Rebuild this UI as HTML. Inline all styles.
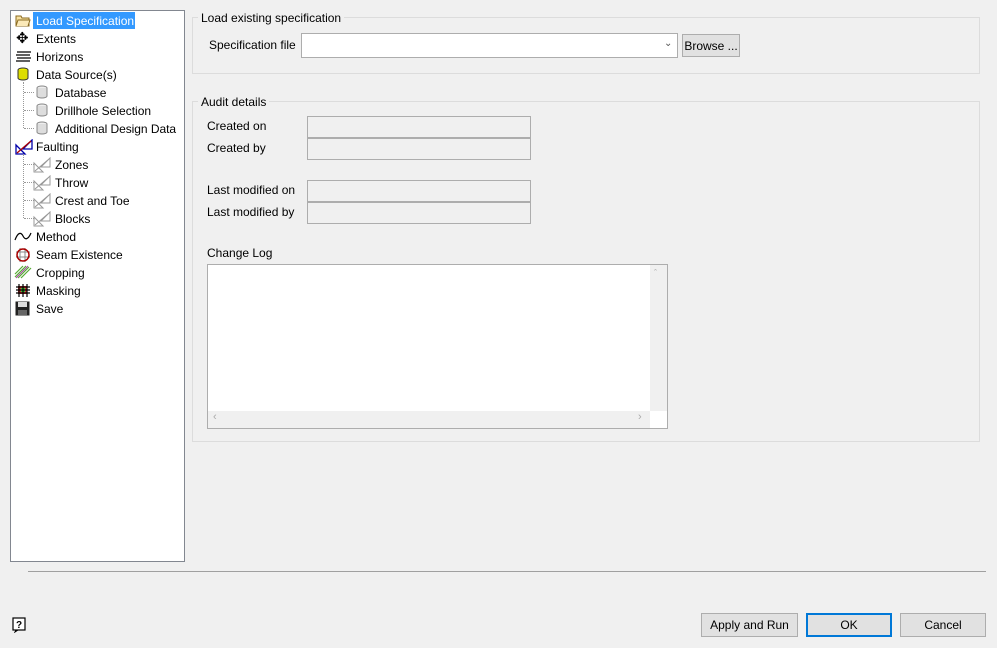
<!DOCTYPE html><html><head><style>
body{margin:0;width:997px;height:648px;background:#f0f0f0;font-family:"Liberation Sans",sans-serif;font-size:12px;color:#000;position:relative;overflow:hidden}
.a{position:absolute}
.tree{left:10px;top:10px;width:173px;height:550px;background:#fff;border:1px solid #828790}
.it{position:absolute;height:16px;line-height:16px;white-space:nowrap}
.gb{border:1px solid #dcdcdc}
.gt{background:#f0f0f0;padding:0 3px;line-height:14px}
.fld{background:#f0f0f0;border:1px solid #adadad;box-sizing:border-box}
.btn{background:#e1e1e1;border:1px solid #adadad;box-sizing:border-box;text-align:center;line-height:22px}
.dot{position:absolute;border-left:1px dotted #999}
.doth{position:absolute;border-top:1px dotted #999;width:10px}
</style></head><body>
<div class="a tree"></div>
<div class="a" style="left:33px;top:12px;width:102px;height:17px;background:#3399ff"></div>
<svg class="a" style="left:15px;top:13px" width="16" height="14"><path d="M1 3h5l1 2h7v8H1z" fill="#f7e0a0" stroke="#8a6a20"/><path d="M1 13l2-6h12l-2 6" fill="#fbe9b8" stroke="#8a6a20"/></svg>
<div class="it" style="left:36px;top:13px;color:#fff">Load Specification</div>
<div class="it" style="left:16px;top:31px;font-size:15px">✥</div><div class="it" style="left:36px;top:31px">Extents</div>
<svg class="a" style="left:15px;top:50px" width="17" height="13"><path d="M2 2h14M1 5h14M2 8h14M1 11h14" stroke="#000" stroke-width="1.3"/></svg><div class="it" style="left:36px;top:49px">Horizons</div>
<svg class="a" style="left:17px;top:67px" width="12" height="14"><ellipse cx="6" cy="3" rx="5" ry="2" fill="#ee0" stroke="#333"/><path d="M1 3v8a5 2 0 0 0 10 0V3" fill="#dd0" stroke="#333"/></svg><div class="it" style="left:36px;top:67px">Data Source(s)</div>
<div class="dot" style="left:23px;top:82px;height:46px"></div>
<div class="doth" style="left:24px;top:92px"></div><div class="doth" style="left:24px;top:110px"></div><div class="doth" style="left:24px;top:128px"></div>
<svg class="a" style="left:36px;top:85px" width="12" height="14"><ellipse cx="6" cy="3" rx="5" ry="2" fill="#eee" stroke="#888"/><path d="M1 3v8a5 2 0 0 0 10 0V3" fill="#ddd" stroke="#888"/></svg><div class="it" style="left:55px;top:85px">Database</div>
<svg class="a" style="left:36px;top:103px" width="12" height="14"><ellipse cx="6" cy="3" rx="5" ry="2" fill="#eee" stroke="#888"/><path d="M1 3v8a5 2 0 0 0 10 0V3" fill="#ddd" stroke="#888"/></svg><div class="it" style="left:55px;top:103px">Drillhole Selection</div>
<svg class="a" style="left:36px;top:121px" width="12" height="14"><ellipse cx="6" cy="3" rx="5" ry="2" fill="#eee" stroke="#888"/><path d="M1 3v8a5 2 0 0 0 10 0V3" fill="#ddd" stroke="#888"/></svg><div class="it" style="left:55px;top:121px;letter-spacing:-0.05px">Additional Design Data</div>
<svg class="a" style="left:15px;top:139px" width="18" height="16"><path d="M1 15h9L1 6z" fill="none" stroke="#00a" stroke-width="1.3"/><path d="M8 10l9 0V1z" fill="none" stroke="#00a" stroke-width="1.3"/><path d="M2 14L16 2" stroke="#a00" stroke-width="1.3"/></svg><div class="it" style="left:36px;top:139px">Faulting</div>
<div class="dot" style="left:23px;top:154px;height:64px"></div>
<div class="doth" style="left:24px;top:164px"></div><div class="doth" style="left:24px;top:182px"></div><div class="doth" style="left:24px;top:200px"></div><div class="doth" style="left:24px;top:218px"></div>
<svg class="a" style="left:33px;top:157px" width="18" height="16"><path d="M1 15h9L1 6zM8 10h9V1zM2 14L16 2" fill="none" stroke="#999"/></svg><div class="it" style="left:55px;top:157px">Zones</div>
<svg class="a" style="left:33px;top:175px" width="18" height="16"><path d="M1 15h9L1 6zM8 10h9V1zM2 14L16 2" fill="none" stroke="#999"/></svg><div class="it" style="left:55px;top:175px">Throw</div>
<svg class="a" style="left:33px;top:193px" width="18" height="16"><path d="M1 15h9L1 6zM8 10h9V1zM2 14L16 2" fill="none" stroke="#999"/></svg><div class="it" style="left:55px;top:193px">Crest and Toe</div>
<svg class="a" style="left:33px;top:211px" width="18" height="16"><path d="M1 15h9L1 6zM8 10h9V1zM2 14L16 2" fill="none" stroke="#999"/></svg><div class="it" style="left:55px;top:211px">Blocks</div>
<svg class="a" style="left:14px;top:230px" width="18" height="12"><path d="M1 10C4 2 7 2 9 6s5 4 8-3" fill="none" stroke="#000" stroke-width="1.2"/></svg><div class="it" style="left:36px;top:229px">Method</div>
<svg class="a" style="left:15px;top:247px" width="16" height="16"><path d="M1 5h14M1 10h14M5 1v14M10 1v14" stroke="#888"/><circle cx="8" cy="8" r="6" fill="none" stroke="#a00" stroke-width="1.5"/></svg><div class="it" style="left:36px;top:247px">Seam Existence</div>
<svg class="a" style="left:14px;top:265px" width="18" height="14"><path d="M1 12L12 1M4 13L15 2M7 13L17 3M1 9L9 1" stroke="#5a3" stroke-width="1.2"/><path d="M2 13L14 1" stroke="#a4a"/></svg><div class="it" style="left:36px;top:265px">Cropping</div>
<svg class="a" style="left:15px;top:283px" width="16" height="14"><rect x="3" y="3" width="9" height="8" fill="#d33"/><rect x="6" y="5" width="4" height="4" fill="#3c3"/><path d="M1 4h14M1 7h14M1 10h14M4 1v13M8 1v13M12 1v13" stroke="#000" stroke-width="1.2"/></svg><div class="it" style="left:36px;top:283px">Masking</div>
<svg class="a" style="left:15px;top:301px" width="15" height="15"><rect x="0.5" y="0.5" width="14" height="14" fill="#222"/><rect x="3" y="1" width="9" height="5" fill="#ddd"/><rect x="3" y="9" width="9" height="5" fill="#666"/></svg><div class="it" style="left:36px;top:301px">Save</div>

<div class="a gb" style="left:192px;top:17px;width:786px;height:55px"></div>
<div class="a gt" style="left:198px;top:11px">Load existing specification</div>
<div class="a" style="left:209px;top:38px">Specification file</div>
<div class="a" style="left:301px;top:33px;width:377px;height:25px;background:#fff;border:1px solid #adadad;box-sizing:border-box"></div>
<div class="a" style="left:664px;top:38px;font-size:10px;color:#555">&#8964;</div>
<div class="a btn" style="left:682px;top:34px;width:58px;height:23px">Browse ...</div>

<div class="a gb" style="left:192px;top:101px;width:786px;height:339px"></div>
<div class="a gt" style="left:198px;top:95px">Audit details</div>
<div class="a" style="left:207px;top:119px">Created on</div>
<div class="a" style="left:207px;top:141px">Created by</div>
<div class="a" style="left:207px;top:183px">Last modified on</div>
<div class="a" style="left:207px;top:205px">Last modified by</div>
<div class="a fld" style="left:307px;top:116px;width:224px;height:22px"></div>
<div class="a fld" style="left:307px;top:138px;width:224px;height:22px"></div>
<div class="a fld" style="left:307px;top:180px;width:224px;height:22px"></div>
<div class="a fld" style="left:307px;top:202px;width:224px;height:22px"></div>
<div class="a" style="left:207px;top:246px">Change Log</div>
<div class="a" style="left:207px;top:264px;width:461px;height:165px;background:#fff;border:1px solid #adadad;box-sizing:border-box"></div>
<div class="a" style="left:650px;top:265px;width:17px;height:146px;background:#f0f0f0"></div>
<div class="a" style="left:208px;top:411px;width:442px;height:17px;background:#f0f0f0"></div>
<div class="a" style="left:654px;top:268px;font-size:9px;color:#aaa">&#710;</div>
<div class="a" style="left:213px;top:411px;font-size:11px;color:#aaa">&lsaquo;</div>
<div class="a" style="left:638px;top:411px;font-size:11px;color:#aaa">&rsaquo;</div>

<div class="a" style="left:28px;top:571px;width:958px;height:1px;background:#a0a0a0"></div>
<svg class="a" style="left:12px;top:617px" width="15" height="16"><rect x="1" y="1" width="12" height="12" fill="#fff" stroke="#000" stroke-width="1.2"/><path d="M4 13l-1 2 3-2" fill="#000" stroke="#000"/><text x="7" y="11" font-size="10" font-weight="bold" text-anchor="middle" font-family="Liberation Sans">?</text></svg>
<div class="a btn" style="left:701px;top:613px;width:97px;height:24px">Apply and Run</div>
<div class="a btn" style="left:806px;top:613px;width:86px;height:24px;border:1px solid #0078d7;box-shadow:inset 0 0 0 1px #0078d7">OK</div>
<div class="a btn" style="left:900px;top:613px;width:86px;height:24px">Cancel</div>
</body></html>
